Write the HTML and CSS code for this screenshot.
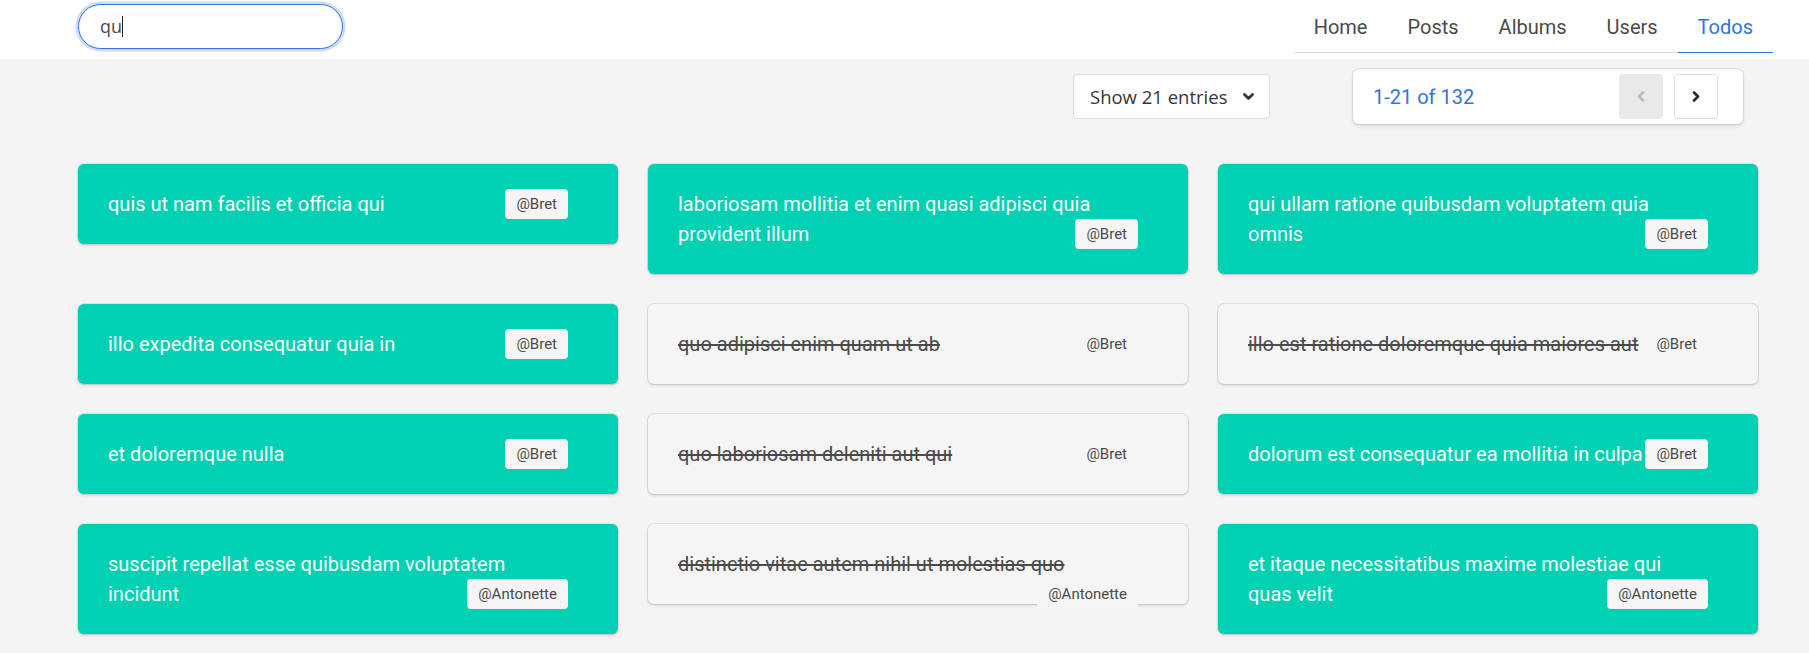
FILE: index.html
```html
<!DOCTYPE html>
<html lang="en">
<head>
<meta charset="utf-8">
<title>Todos</title>
<link rel="stylesheet" href="styles.css">
</head>
<body>
<header class="topbar">
  <label class="search-wrap">
    <input class="search" type="text" value="qu">
    <span class="caret"></span>
  </label>
  <nav class="tabs">
    <a class="tab">Home</a>
    <a class="tab">Posts</a>
    <a class="tab">Albums</a>
    <a class="tab">Users</a>
    <a class="tab active">Todos</a>
  </nav>
</header>
<main>
  <div class="controls">
    <div class="select">
      <span>Show 21 entries</span>
      <svg class="chev-down" width="11" height="8" viewBox="0 0 11 8"><polyline points="1.5,1.5 5.5,5.5 9.5,1.5" fill="none" stroke="#363636" stroke-width="2.8" stroke-linecap="round" stroke-linejoin="round"/></svg>
    </div>
    <div class="pager">
      <span class="range">1-21 of 132</span>
      <div class="pbtn prev">
        <svg width="8" height="11" viewBox="0 0 8 11"><polyline points="6,1.5 2,5.5 6,9.5" fill="none" stroke="#bdbdbd" stroke-width="2.6" stroke-linecap="round" stroke-linejoin="round"/></svg>
      </div>
      <div class="pbtn next">
        <svg width="8" height="11" viewBox="0 0 8 11"><polyline points="2,1.5 6,5.5 2,9.5" fill="none" stroke="#2b2b2b" stroke-width="2.6" stroke-linecap="round" stroke-linejoin="round"/></svg>
      </div>
    </div>
  </div>
  <div class="grid">
    <div class="cell"><div class="card todo"><span class="title">quis ut nam facilis et officia qui</span><span class="tag">@Bret</span></div></div>
    <div class="cell"><div class="card todo"><span class="title">laboriosam mollitia et enim quasi adipisci quia provident illum</span><span class="tag">@Bret</span></div></div>
    <div class="cell"><div class="card todo"><span class="title">qui ullam ratione quibusdam voluptatem quia omnis</span><span class="tag">@Bret</span></div></div>

    <div class="cell"><div class="card todo"><span class="title">illo expedita consequatur quia in</span><span class="tag">@Bret</span></div></div>
    <div class="cell"><div class="card done"><span class="title">quo adipisci enim quam ut ab</span><span class="tag">@Bret</span></div></div>
    <div class="cell"><div class="card done"><span class="title">illo est ratione doloremque quia maiores aut</span><span class="tag">@Bret</span></div></div>

    <div class="cell"><div class="card todo"><span class="title">et doloremque nulla</span><span class="tag">@Bret</span></div></div>
    <div class="cell"><div class="card done"><span class="title">quo laboriosam deleniti aut qui</span><span class="tag">@Bret</span></div></div>
    <div class="cell"><div class="card todo"><span class="title">dolorum est consequatur ea mollitia in culpa</span><span class="tag">@Bret</span></div></div>

    <div class="cell"><div class="card todo"><span class="title">suscipit repellat esse quibusdam voluptatem incidunt</span><span class="tag">@Antonette</span></div></div>
    <div class="cell"><div class="card done"><span class="title">distinctio vitae autem nihil ut molestias quo</span><span class="tag">@Antonette</span></div></div>
    <div class="cell"><div class="card todo"><span class="title">et itaque necessitatibus maxime molestiae qui quas velit</span><span class="tag">@Antonette</span></div></div>
  </div>
</main>
</body>
</html>
```
FILE: styles.css
```css
* { box-sizing: border-box; }

html, body {
  margin: 0;
  background: #f4f4f4;
  font-family: Roboto, "Liberation Sans", Arial, sans-serif;
  color: #4a4a4a;
}

.topbar {
  background: #ffffff;
  height: 59px;
  display: flex;
  justify-content: space-between;
  align-items: flex-start;
  padding: 0 36px 0 78px;
}

.search-wrap {
  position: relative;
  display: block;
  margin-top: 4px;
}

.search {
  display: block;
  width: 265px;
  height: 45px;
  border: 1px solid #3273dc;
  border-radius: 9999px;
  box-shadow: 0 0 0 2.5px rgba(50, 115, 220, 0.25);
  padding: 0 0 2px 21px;
  font-family: "Open Sans", "Noto Sans", sans-serif;
  font-size: 18px;
  color: #4a4a4a;
  outline: none;
  background: #fff;
}

.caret {
  position: absolute;
  left: 44px;
  top: 12px;
  width: 1px;
  height: 21px;
  background: #222;
}

.tabs {
  margin-top: 2px;
  display: flex;
  border-bottom: 1px solid #dbdbdb;
}

.tab {
  display: block;
  padding: 10px 20px;
  line-height: 30px;
  font-size: 20px;
  color: #4a4a4a;
  border-bottom: 1px solid #dbdbdb;
  margin-bottom: -1px;
  cursor: pointer;
}

.tab.active {
  color: #3273dc;
  border-bottom-color: #3273dc;
}

.controls {
  display: flex;
  justify-content: flex-end;
  align-items: center;
  gap: 83px;
  padding: 10px 66px 0 0;
}

.select {
  width: 197px;
  height: 45px;
  background: #fff;
  border: 1px solid #dbdbdb;
  border-radius: 4px;
  display: flex;
  align-items: center;
  justify-content: space-between;
  padding: 0 15px 0 16px;
  font-family: "Open Sans", "Noto Sans", sans-serif;
  font-size: 18.5px;
  color: #363636;
}

.chev-down { margin-top: 1px; }

.pager {
  width: 390px;
  height: 55px;
  background: #fff;
  border-radius: 6px;
  box-shadow: 0 0 0 1px rgba(10, 10, 10, 0.07), 0 2px 4px rgba(10, 10, 10, 0.12);
  display: flex;
  align-items: center;
  padding: 0 25px 0 20px;
  gap: 11px;
}

.range {
  flex: 1;
  font-size: 20px;
  color: #3273dc;
}

.pbtn {
  width: 44px;
  height: 45px;
  border-radius: 4px;
  display: flex;
  align-items: center;
  justify-content: center;
}

.pbtn.prev { background: #e9e9e9; }
.pbtn.next { background: #fff; border: 1px solid #dbdbdb; }

.grid {
  display: grid;
  grid-template-columns: repeat(3, 540px);
  column-gap: 30px;
  row-gap: 30px;
  align-items: start;
  padding: 40px 0 20px 78px;
}

.card {
  border-radius: 6px;
  padding: 25px 50px 25px 30px;
  font-size: 20px;
  line-height: 30px;
  box-shadow: 0 0 0 1px rgba(10, 10, 10, 0.09), 0 2px 3px rgba(10, 10, 10, 0.1);
}

.card.todo {
  background: #00d1b2;
  color: #ffffff;
}

.card.done {
  background: #f5f5f5;
  color: #4a4a4a;
}

.card.done .title {
  text-decoration: line-through;
  text-decoration-thickness: 2px;
}

.tag {
  float: right;
  height: 30px;
  line-height: 30px;
  padding: 0 11px;
  font-size: 15px;
  border-radius: 4px;
  background: #f5f5f5;
  color: #4a4a4a;
}
```
